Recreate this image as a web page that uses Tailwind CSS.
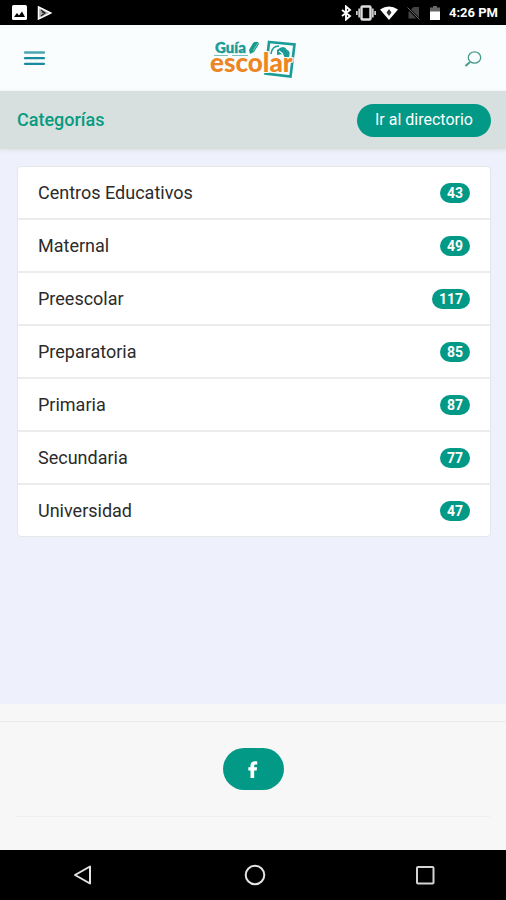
<!DOCTYPE html>
<html lang="es">
<head>
    <meta charset="UTF-8">
    <meta name="viewport" content="width=device-width, initial-scale=1.0">
    <title>Guía escolar</title>
    <script src="https://cdn.jsdelivr.net/npm/@tailwindcss/browser@4"></script>
</head>
<body class="flex min-h-screen flex-col bg-[#eef0fb] font-[Roboto,sans-serif] text-[#2b2b2b]">

    <!-- Status bar -->
    <div class="flex h-[25px] items-center justify-between bg-black pl-3 pr-2 text-white">
        <div class="flex items-center gap-[10px]">
            <svg class="h-[15px] w-[15px]" viewBox="0 0 15 15"><rect width="15" height="15" rx="1.5" fill="#fff"/><path d="M2 12l3-4 2 2.500 3-4 3 5.500z" fill="#000"/></svg>
            <svg class="h-[14px] w-[15px]" viewBox="0 0 15 14"><path d="M1.500 1l12.500 6-12.500 6z" fill="#aaa" stroke="#fff" stroke-width="1.500"/><path d="M4 4l4 3-4 3M8 7l-3-1" fill="none" stroke="#222" stroke-width="1.200"/></svg>
        </div>
        <div class="flex items-center gap-1">
            <svg class="h-4 w-3" viewBox="0 0 12 16"><path d="M2 5l8 6-4 3.500v-13L10 5l-8 6" fill="none" stroke="#fff" stroke-width="1.900"/></svg>
            <svg class="h-4 w-5" viewBox="0 0 20 16"><rect x="5.500" y="1.500" width="9" height="13" rx="1" fill="none" stroke="#ddd" stroke-width="2.400"/><path d="M3.200 3.500v9M16.800 3.500v9M.8 6v4M19.200 6v4" stroke="#ccc" stroke-width="1.800"/></svg>
            <svg class="h-4 w-[18px]" viewBox="0 0 18 16"><path d="M0 4.500Q9-1.500 18 4.500L9 15z" fill="#fff"/><path d="M9 4l2.500 3.500L9 11 6.500 7.500z" fill="#333"/></svg>
            <svg class="ml-1 h-4 w-[15px]" viewBox="0 0 15 16"><path d="M13 2v11.500H2.500V7l5-5z" fill="#444"/><path d="M1 2l12.500 13" stroke="#000" stroke-width="2.500"/><path d="M1.500 2.500l12 12" stroke="#666"/></svg>
            <svg class="ml-1 h-4 w-3" viewBox="0 0 12 16"><path d="M4 1h4v1.500h3V7H1V2.500h3z" fill="#666"/><path d="M1 6.500h10V15H1z" fill="#fff"/></svg>
            <span class="ml-1 text-[13px] font-bold">4:26 PM</span>
        </div>
    </div>

    <header class="grid h-[66px] grid-cols-3 items-center bg-[#fafdfe] px-6">
        <button class="justify-self-start" aria-label="Menú">
            <svg class="h-5 w-[21px]" viewBox="0 0 21 20"><path d="M1 4.500h19" stroke="#4ba6b1" stroke-width="2.400" stroke-linecap="round"/><path d="M1 10.200h19M1 15.800h19" stroke="#188c9e" stroke-width="2.200" stroke-linecap="round"/></svg>
        </button>
        <a href="#" class="justify-self-center" aria-label="Guía escolar">
            <svg class="h-11 w-[88px]" viewBox="0 0 88 44">
                <path d="M60 6l25.500 2.500-4 32-25-3z" fill="#fafdfe" stroke="#1a9c98" stroke-width="2.600"/>
                <path d="M62 18q1-8 8-8" fill="none" stroke="#1a9c98" stroke-width="1.600"/>
                <path d="M68 14q7-6 10 0 4 1 2 7l-4 1-2-4-6 1z" fill="#1a9c98"/>
                <path d="M70 15l4 3" stroke="#fafdfe" stroke-width="1.300"/>
                <path d="M40 14l4-7q2-2 5-1l1 2-5 8-4 2z" fill="#1a9c88"/>
                <path d="M44 15l5-8" stroke="#8bcdc5" stroke-width=".8"/>
                <path d="M5 19.500h14M23 19.500h16" stroke="#69b9ba" stroke-width=".9"/>
                <text x="6" y="17" font-family="Lato, sans-serif" font-size="15" font-weight="900" fill="#1a9c98" stroke="#1a9c98" stroke-width=".4">Guía</text>
                <text x="1" y="36" font-family="Lato, sans-serif" font-size="26" font-weight="900" fill="#ed8523" stroke="#fafdfe" stroke-width="2" paint-order="stroke">escolar</text>
            </svg>
        </a>
        <button class="justify-self-end" aria-label="Buscar">
            <svg class="h-[18px] w-[18px]" viewBox="0 0 18 18" fill="none" stroke="#459d8c"><ellipse cx="10.500" cy="8.500" rx="6.200" ry="5.700" stroke-width="1.300"/><path d="M6 13l-4.500 4" stroke-width="2"/></svg>
        </button>
    </header>

    <div class="flex h-[58px] items-center justify-between bg-[#d8dfdf] pl-[17px] pr-[15px] shadow-[0_1px_4px_#d8dfdf]">
        <h1 class="text-lg font-medium text-[#079b80]">Categorías</h1>
        <a href="#" class="flex h-[33px] items-center rounded-full bg-[#029987] px-[18px] text-base text-white">Ir al directorio</a>
    </div>

    <main class="flex-1 pl-[17px] pr-[15px] pt-[17px]">
        <ul class="divide-y-2 divide-[#ececee] rounded border border-[#e4e6ea] bg-white text-lg">
            <li><a href="#" class="flex h-[51px] items-center justify-between px-5">Centros Educativos <span class="rounded-full bg-[#029987] px-[7px] text-[14px] leading-5 font-bold text-white">43</span></a></li>
            <li><a href="#" class="flex h-[51px] items-center justify-between px-5">Maternal <span class="rounded-full bg-[#029987] px-[7px] text-[14px] leading-5 font-bold text-white">49</span></a></li>
            <li><a href="#" class="flex h-[51px] items-center justify-between px-5">Preescolar <span class="rounded-full bg-[#029987] px-[7px] text-[14px] leading-5 font-bold text-white">117</span></a></li>
            <li><a href="#" class="flex h-[51px] items-center justify-between px-5">Preparatoria <span class="rounded-full bg-[#029987] px-[7px] text-[14px] leading-5 font-bold text-white">85</span></a></li>
            <li><a href="#" class="flex h-[51px] items-center justify-between px-5">Primaria <span class="rounded-full bg-[#029987] px-[7px] text-[14px] leading-5 font-bold text-white">87</span></a></li>
            <li><a href="#" class="flex h-[51px] items-center justify-between px-5">Secundaria <span class="rounded-full bg-[#029987] px-[7px] text-[14px] leading-5 font-bold text-white">77</span></a></li>
            <li><a href="#" class="flex h-[51px] items-center justify-between px-5">Universidad <span class="rounded-full bg-[#029987] px-[7px] text-[14px] leading-5 font-bold text-white">47</span></a></li>
        </ul>
    </main>

    <footer class="bg-[#f7f7f7] pt-[17px] pb-[33px]">
        <div class="flex justify-center border-t border-[#ebebeb] py-[26px]">
            <a href="#" aria-label="Facebook" class="flex h-[42px] w-[61px] items-center justify-center rounded-full bg-[#029987]">
                <svg class="h-[17px] w-[10px]" viewBox="0 0 10 17"><path d="M2.500 17V9.500H.3V6.200h2.200V4.600C2.500 1.700 4.300.3 7 .3c1 0 1.700.1 2.200.2v2.900H7.700C6.500 3.400 6.200 3.800 6.200 4.700v1.500h2.900l-.4 3.300H6.200V17z" fill="#fff"/></svg>
            </a>
        </div>
        <hr class="mx-4 border-[#efefef]">
    </footer>

    <!-- Navigation buttons -->
    <nav class="flex h-[50px] items-center justify-between bg-black pl-[72px] pr-[69px]">
        <button aria-label="Atrás"><svg class="h-6 w-6" viewBox="0 0 24 24"><path d="M18 3.500v17L3 12z" fill="none" stroke="#e4e4e4" stroke-width="2" stroke-linejoin="round"/></svg></button>
        <button aria-label="Inicio"><svg class="h-6 w-6" viewBox="0 0 24 24"><circle cx="12" cy="12" r="9.300" fill="none" stroke="#e4e4e4" stroke-width="2"/></svg></button>
        <button aria-label="Recientes"><svg class="h-6 w-6" viewBox="0 0 24 24"><rect x="4" y="4" width="16.500" height="16.500" rx="1" fill="none" stroke="#d4d4d4" stroke-width="2"/></svg></button>
    </nav>

</body>
</html>
